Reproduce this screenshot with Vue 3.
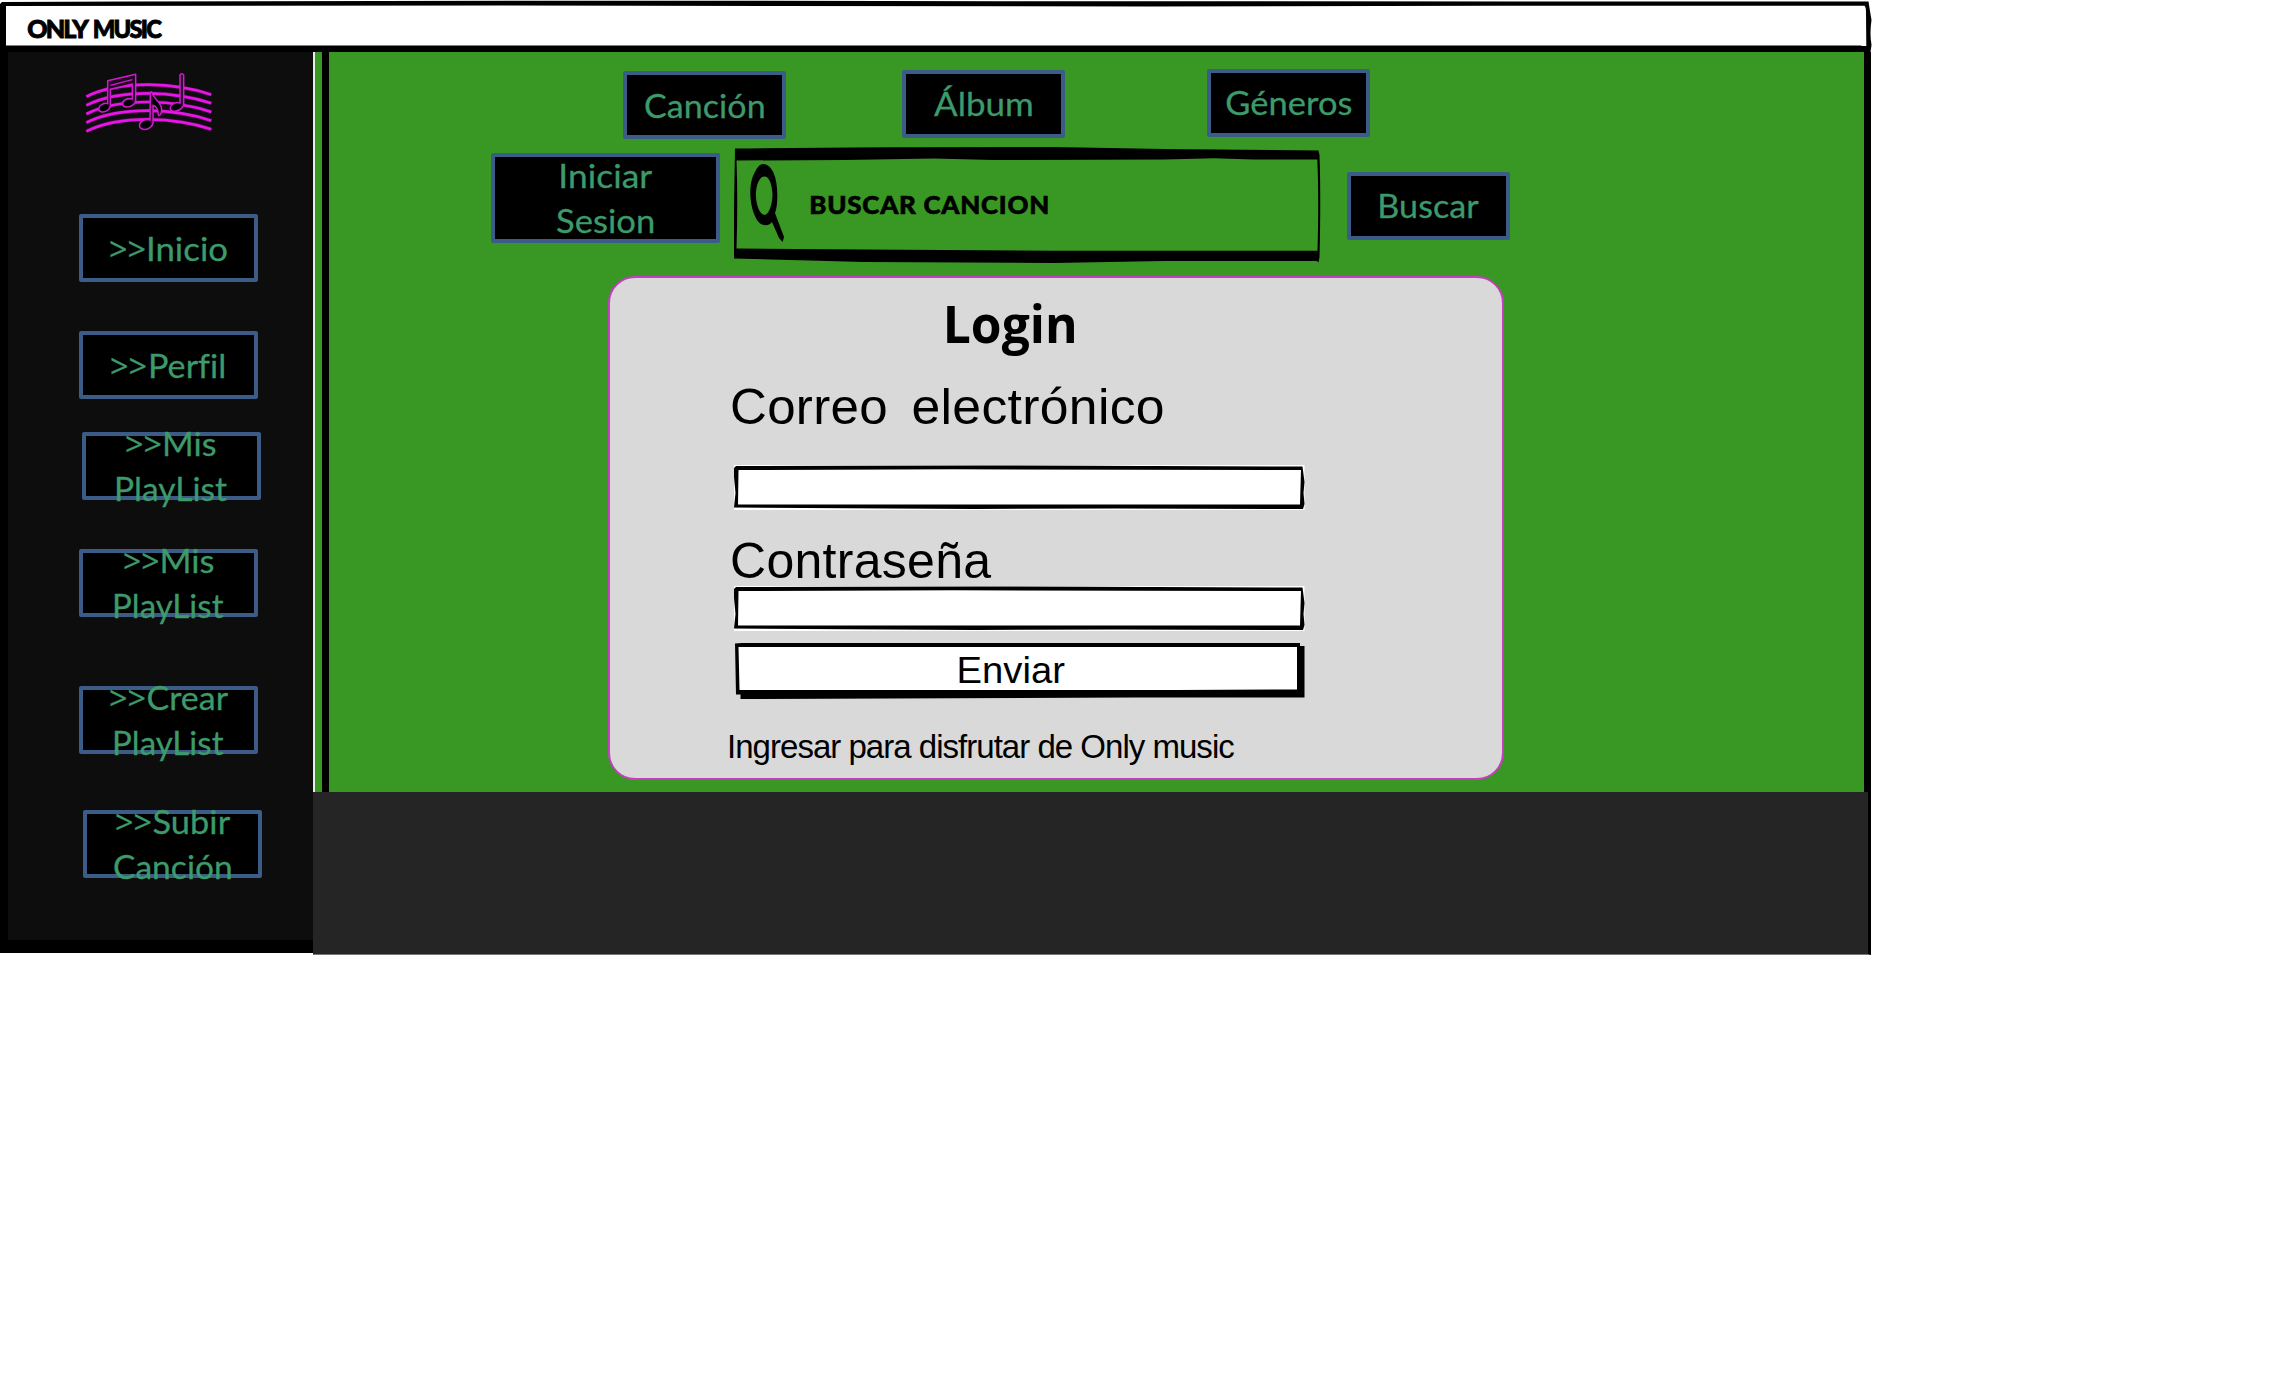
<script setup>
import { h } from 'vue'

const ctx = document.createElement('canvas').getContext('2d')

// One run of text whose ink spans from `from` to `to`, standing on `base`.
// The default spacing is just enough to keep "fi" from joining.
const Ink = ({ t, from, to, base, size, family = 'Lato', weight = 400, spacing = 0.05, bold = 0 }) => {
  ctx.font = `${weight} ${size}px "${family}"`
  ctx.letterSpacing = `${spacing}px`
  const m = ctx.measureText(t)
  const scale = (to - from) / (m.actualBoundingBoxLeft + m.actualBoundingBoxRight)
  return h('text', {
    x: m.actualBoundingBoxLeft,
    y: 0,
    transform: `translate(${from} ${base}) scale(${scale.toFixed(4)} 1)`,
    'font-family': `"${family}", sans-serif`,
    'font-size': size,
    'font-weight': weight,
    'letter-spacing': spacing,
    stroke: bold ? 'currentColor' : 'none',
    'stroke-width': bold
  }, t)
}
Ink.props = ['t', 'from', 'to', 'base', 'size', 'family', 'weight', 'spacing', 'bold']

const nav = [
  { gap: 162, left: 79, runs: [['>>', 31, 66, 46.5], ['Inicio', 70, 148, 46.5]] },
  { gap: 49, left: 79.4, runs: [['>>', 32, 67, 46.8], ['Perfil', 72, 145.5, 46.8]] },
  { gap: 33, left: 82, runs: [['>>', 44, 79, 23.7], ['Mis', 83, 134, 23.7], ['PlayList', 35, 145, 68.7]] },
  { gap: 49, left: 79, runs: [['>>', 45, 79.5, 23.7], ['Mis', 83.5, 135, 23.7], ['PlayList', 36, 144.5, 68.7]] },
  { gap: 69, left: 79, runs: [['>>', 31, 66, 23.5], ['Crear', 68.5, 149, 23.5], ['PlayList', 36, 144.5, 68.7]] },
  { gap: 55.5, left: 83, runs: [['>>', 33, 68, 23.5], ['Subir', 70.5, 147, 23.5], ['Canción', 31, 148, 68.5]] }
]

const tabs = [
  { gap: 294, top: 19.3, t: 'Canción', from: 22, to: 141, base: 46.6 },
  { gap: 116.4, top: 18, t: 'Álbum', from: 32, to: 130.2, base: 46 },
  { gap: 142, top: 17.2, t: 'Géneros', from: 19.3, to: 145, base: 46.4 }
]
</script>

<template>
  <div class="window">
    <header class="titlebar">
      <svg class="fill" viewBox="0 0 1872 52">
        <path class="ink" d="M2 2Q500 0 1000 1.300L1868.500 1.500Q1869.500 8 1871.500 20Q1869.500 34 1871.500 45L1870.500 52H0V4Z" />
        <path class="paper" d="M6 6L500 5.500L1150 6.500L1500 5.700L1864.500 5.700Q1866 7 1866 12L1866.300 46L1862 46L1861 45.400H6Z" />
        <Ink t="ONLY" :from="27.2" :to="89.8" :base="37.6" :size="24.3" :weight="900" :spacing="-1.8" :bold="0.9" />
        <Ink t="MUSIC" :from="93.6" :to="161.8" :base="37.6" :size="24.3" :weight="900" :spacing="-1.8" :bold="0.9" />
      </svg>
    </header>
    <div class="body">
      <aside class="sidebar">
        <svg class="logo" width="180" height="90" viewBox="0 0 540 270">
          <g class="glow">
            <path v-for="i in 5" :key="i" :d="`M79 ${84 + i * 26}Q150 ${48 + i * 26} 265 ${48 + i * 26}Q370 ${49 + i * 26} 454 ${78 + i * 26}`" />
          </g>
          <g class="staff">
            <path v-for="i in 5" :key="i" :d="`M79 ${84 + i * 26}Q150 ${48 + i * 26} 265 ${48 + i * 26}Q370 ${49 + i * 26} 454 ${78 + i * 26}`" />
          </g>
          <g class="notes">
            <path d="M143 62L227 43V120C227 134 211 142 198 141C184 140 185 126 196 119Q206 114 217 117V72L151 88V138C149 152 133 158 123 155C111 152 117 137 126 133Q135 128 143 131Z" />
            <path class="bar" d="M151 76L217 59" />
            <path d="M271 98Q274 93 277 100C281 115 298 123 304 141C307 154 303 166 297 167C291 165 298 151 290 144Q285 137 279 136V188C277 204 258 211 247 207C232 202 239 185 251 181Q261 177 270 180Z" />
            <path d="M360 45Q365 37 371 45V132C370 147 350 156 338 153C326 150 331 135 342 130Q351 126 360 129Z" />
          </g>
          <g class="heads">
            <ellipse cx="132" cy="143" rx="13" ry="8" transform="rotate(-22 132 143)" />
            <ellipse cx="205" cy="129" rx="13" ry="8" transform="rotate(-22 205 129)" />
            <ellipse cx="257" cy="194" rx="15" ry="10" transform="rotate(-22 257 194)" />
            <ellipse cx="347" cy="141" rx="14" ry="8" transform="rotate(-22 347 141)" />
            <path d="M278 111C285 121 298 128 301 144Q301 154 297 159C298 144 286 134 278 131Z" />
          </g>
        </svg>
        <nav class="nav">
          <div v-for="(n, i) in nav" :key="i" class="box side" :style="{ marginTop: n.gap + 'px', marginLeft: n.left + 'px' }">
            <svg><Ink v-for="r in n.runs" :key="r[0]" :t="r[0]" :from="r[1]" :to="r[2]" :base="r[3]" :size="33.5" :family="r[0] === '>>' ? 'Open Sans' : 'Lato'" :bold="0.3" /></svg>
          </div>
        </nav>
      </aside>
      <main class="main">
        <section class="stage">
          <div class="rail"></div>
          <div class="content">
            <div class="tabs">
              <div v-for="b in tabs" :key="b.t" class="box top" :style="{ marginLeft: b.gap + 'px', marginTop: b.top + 'px' }">
                <svg><Ink :t="b.t" :from="b.from" :to="b.to" :base="b.base" :size="33.5" :bold="0.3" /></svg>
              </div>
            </div>
            <div class="searchrow">
              <div class="box session">
                <svg>
                  <Ink t="Iniciar" :from="70.4" :to="161" :base="34.7" :size="33.5" :bold="0.3" />
                  <Ink t="Sesion" :from="66" :to="162.500" :base="80" :size="33.5" :bold="0.3" />
                </svg>
              </div>
              <svg class="search" width="586" height="117">
                <path class="ink" fill-rule="evenodd" d="M1 1.500Q150 0 320 0L430 2L584.500 3.500L585.500 8Q587 50 585.500 110L584.500 115.500L583 114L430 114L320 116L130 115L0 111.500V60Z M2.500 13.500Q4 55 2.500 101.500L130 102.500L320 103.800H583.500Q585 50 583.300 12.500L520 12.500L480 11.300L430 12.600L260 13L200 11.500L110 13Z" />
                <path class="ink" fill-rule="evenodd" d="M30 17C40 19 43.500 34 43.300 49Q43.300 60 41 66L50 90L48.600 95L45 91L38 75C34 80 27 79 23 73C15 60 14 36 21 25Q25 16 30 17ZM30 29.500C24 30 21.500 42 22 50C22.500 59 26 68 31 68C36 66 38.600 55 38.500 47C38 37 35 29 30 29.500Z" />
                <Ink t="BUSCAR CANCION" :from="76.4" :to="314.2" :base="66.700" :size="24.600" :weight="900" :spacing="0.7" :bold="0.6" />
              </svg>
              <div class="box top find">
                <svg><Ink t="Buscar" :from="33.400" :to="131.600" :base="46.200" :size="33.500" :bold="0.3" /></svg>
              </div>
            </div>
            <form class="panel" @submit.prevent>
              <svg class="heading" width="896" height="78">
                <Ink t="Login" :from="338.5" :to="466" :base="66.500" :size="51.500" family="Open Sans" :weight="700" />
              </svg>
              <svg class="mail" width="896" height="111">
                <Ink t="Correo" :from="124" :to="277.500" :base="69.500" :size="50.500" family="Liberation Sans" :spacing="0.3" />
                <Ink t="electrónico" :from="305.5" :to="554.500" :base="69.500" :size="50.500" family="Liberation Sans" :spacing="0.3" />
              </svg>
              <svg class="field" width="571" height="45">
                <path class="paper" d="M0 0H570.500V45H0Z" />
                <path class="ink" fill-rule="evenodd" d="M2 1Q280 0 420 1L568.500 1.500L570.500 17L569.500 28L570.500 39L569 44L380 43.500L240 44L0 42.500L1.500 28L0 12V3ZM4.500 5L4 39.500L90 39.500H566L567 5L400 4.800L220 4.300Z" />
              </svg>
              <svg class="pass" width="896" height="75.500">
                <Ink t="Contraseña" :from="124" :to="384" :base="67.5" :size="50.500" family="Liberation Sans" :spacing="0.3" />
              </svg>
              <svg class="field" width="571" height="45">
                <path class="paper" d="M0 0H570.500V45H0Z" />
                <path class="ink" fill-rule="evenodd" d="M2 1Q280 0 420 1L568.500 1.500L570.500 17L569.500 28L570.500 39L569 44L380 43.500L240 44L0 42.500L1.500 28L0 12V3ZM4.500 5L4 39.500L90 39.500H566L567 5L400 4.800L220 4.300Z" />
              </svg>
              <svg class="send" width="571" height="56">
                <path class="ink" d="M1 0.500L8 0H566V3H570.500V54.500H400L6.500 56V51.500H2Z" />
                <path class="paper" d="M4.500 4H563V46.500L440 47H5.500Z" />
                <Ink t="Enviar" :from="225.500" :to="330.500" :base="39.700" :size="37.500" family="Liberation Sans" />
              </svg>
              <svg class="foot" width="896" height="70">
                <Ink t="Ingresar para disfrutar de Only music" :from="122" :to="626.300" :base="58.700" :size="33.500" family="Liberation Sans" :spacing="-1" />
              </svg>
            </form>
          </div>
        </section>
        <footer class="footer"></footer>
      </main>
    </div>
  </div>
</template>

<style>
html, body { margin: 0; background: #fff; }
</style>

<style scoped>
.window { width: 1872px; height: 956px; display: flex; flex-direction: column; overflow: hidden; font-family: Lato, sans-serif; }
.window svg { display: block; flex: none; overflow: visible; }
.ink { fill: #000; }
.paper { fill: #fff; }
.titlebar { height: 52px; flex: none; }
.fill { width: 1872px; height: 52px; }
.body { display: flex; flex: 1; min-height: 0; }
.sidebar { box-sizing: border-box; width: 313px; height: 901px; flex: none; background: #0d0d0d; border-left: 8px solid #000; border-bottom: 13px solid #000; }
.logo { margin: 8px 0 -98px 52px; }
.staff, .glow, .notes { fill: none; stroke: #e815e8; stroke-width: 8; }
.glow { stroke: #8d098d; stroke-width: 12; opacity: .45; }
.notes { fill: #220722; stroke: #cf1bcf; stroke-width: 4.500; stroke-linejoin: round; }
.notes .bar { stroke-width: 3.500; }
.heads { fill: #000; }
.nav { display: flex; flex-direction: column; align-items: flex-start; margin-left: -8px; }
.box { box-sizing: border-box; flex: none; background: #000; border: 4px solid #3a5c87; border-radius: 2px; color: #3c9a6b; }
.box svg { width: calc(100% + 8px); height: calc(100% + 8px); margin: -4px; fill: currentColor; }
.side { width: 179px; height: 68px; }
.top { width: 163px; height: 68px; }
.main { width: 1559px; display: flex; flex-direction: column; }
.stage { box-sizing: border-box; width: 1558px; height: 740px; flex: none; display: flex; background: #399724; border-right: 7px solid #000; border-left: 2px solid #e6efe4; }
.rail { width: 7px; flex: none; margin-left: 7px; background: #000; }
.content { width: 1535px; flex: none; }
.tabs { display: flex; align-items: flex-start; height: 95px; }
.searchrow { display: flex; align-items: flex-start; height: 129px; }
.session { width: 229px; height: 90.500px; margin: 5.700px 0 0 162px; }
.search { margin-left: 14px; }
.find { margin: 24.500px 0 0 27px; }
.panel { box-sizing: border-box; width: 896px; height: 504px; margin-left: 279px; display: flex; flex-direction: column; background: #d9d9d9; border: 2px solid #c63dc0; border-radius: 27px; }
.panel > svg { margin-left: -2px; }
.panel > .heading { margin-top: -2px; }
.panel > .field { margin-left: 123.500px; }
.panel > .send { margin: 12.500px 0 0 123.500px; }
.footer { box-sizing: border-box; width: 1558px; height: 163px; background: #252525; border-right: 3px solid #000; border-bottom: 1px solid #777; }
</style>
